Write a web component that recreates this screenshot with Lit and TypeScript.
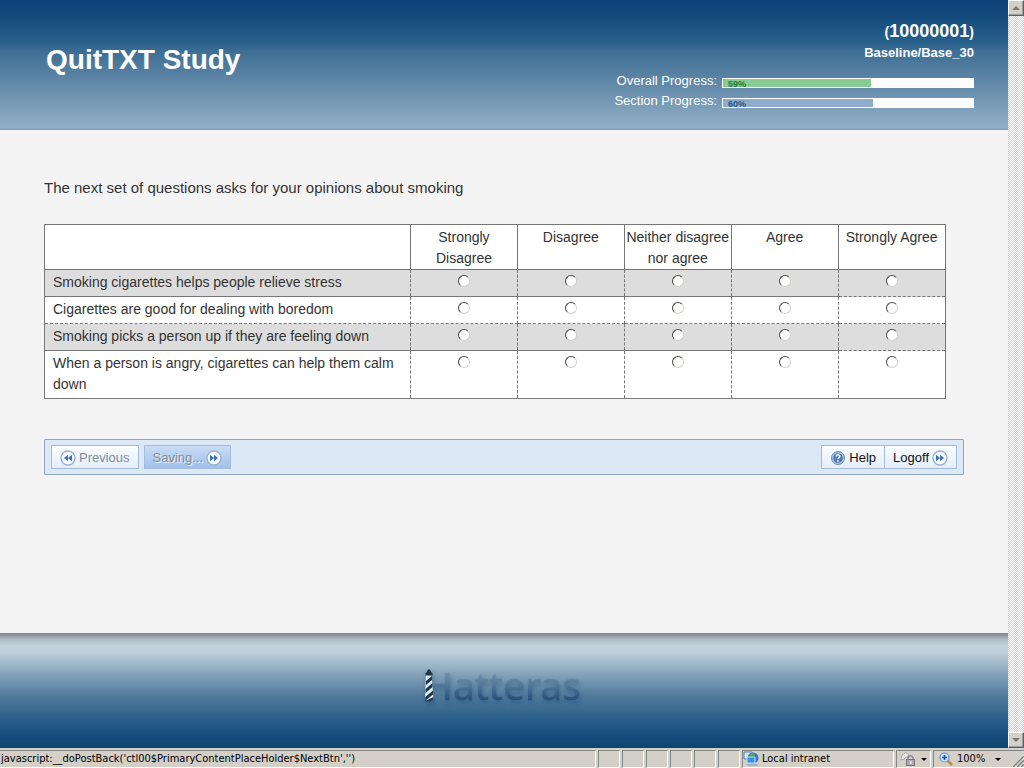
import { LitElement, html, css, svg } from "lit";
import { customElement } from "lit/decorators.js";

const OPTIONS = ["Strongly Disagree", "Disagree", "Neither disagree nor agree", "Agree", "Strongly Agree"];
const STATEMENTS = [
  "Smoking cigarettes helps people relieve stress",
  "Cigarettes are good for dealing with boredom",
  "Smoking picks a person up if they are feeling down",
  "When a person is angry, cigarettes can help them calm down",
];
const PROGRESS = [
  { label: "Overall Progress:", value: 59, kind: "overall" },
  { label: "Section Progress:", value: 60, kind: "section" },
];

const arrows = (back: boolean) => html`
  <svg class="icon" viewBox="0 0 16 16" aria-hidden="true">
    <circle cx="8" cy="8" r="7" fill="#f6faff" stroke="#9fb2cb" stroke-width="1.4" />
    ${back
      ? svg`<path d="M8 4.8v6.4L4 8zM12 4.8v6.4L8 8z" fill="#3c6fb4" />`
      : svg`<path d="M4 4.8v6.4L8 8zM8 4.8v6.4L12 8z" fill="#3c6fb4" />`}
  </svg>`;

const helpIcon = html`
  <svg class="icon" viewBox="0 0 16 16" aria-hidden="true">
    <circle cx="8" cy="8" r="6.5" fill="#a9c3e2" stroke="#6d8bb2" />
    <circle cx="8" cy="8" r="4.8" fill="#4f7cb4" />
    <path d="M6.2 6.6C6.2 4.2 9.9 4.3 9.8 6.5C9.8 7.7 8 7.7 8 9.2" fill="none" stroke="#fff" stroke-width="1.5" />
    <rect x="7.2" y="10.2" width="1.6" height="1.5" fill="#fff" />
  </svg>`;

@customElement("app-root")
export class AppRoot extends LitElement {
  static styles = css`
    :host {
      display: flex;
      flex-direction: column;
      height: 100vh;
      overflow: hidden;
      font-family: "Liberation Sans", Arial, sans-serif;
      color: #333;
      background: #f4f4f4;
    }
    .viewport { flex: 1; display: flex; min-height: 0; }
    .page { flex: 1; display: flex; flex-direction: column; min-width: 0; }
    .header {
      display: flex;
      justify-content: space-between;
      padding: 20px 34px 20px 46px;
      color: #fff;
      background: linear-gradient(#0b447a 0, #124a7c 12%, #27608a 32%, #3f6f95 40%, #6289a9 65%, #92b0c6 98%, #7c9ab0 100%);
    }
    .title { margin: 0; font-size: 28px; line-height: 32px; padding-top: 24px; }
    .status { display: flex; flex-direction: column; align-items: flex-end; }
    .ident { font-size: 14px; line-height: 22px; font-weight: bold; }
    .ident b { font-size: 18px; }
    .place { font-size: 13px; line-height: 20px; font-weight: bold; margin-bottom: 8px; }
    .meter { display: flex; align-items: center; gap: 5px; height: 20px; font-size: 13px; line-height: 20px; }
    .meter + .meter { margin-bottom: -1px; }
    .track {
      box-sizing: border-box;
      width: 252px;
      height: 10px;
      margin-top: 4px;
      background: #fcfcfc;
      border: 1px solid #fff;
    }
    .fill { height: 8px; font-size: 9px; line-height: 11px; font-weight: bold; text-indent: 5px; }
    .overall { background: #87cc92; color: #24783a; }
    .section { background: #8eadcd; color: #23568a; }
    .main { flex: 1; padding: 46px 44px 0; }
    .intro { margin: 0 0 24px; font-size: 15px; line-height: 24px; }
    .grid {
      width: 98%;
      border-collapse: collapse;
      table-layout: fixed;
      font-size: 14px;
      line-height: 21px;
      background: #fff;
      border: 1px solid #777;
    }
    .grid th { font-weight: normal; }
    .blank { width: 365px; border: 1px solid #777; padding: 0; }
    .option { padding: 2px 0 0; text-align: center; vertical-align: top; border: 1px solid #777; }
    .statement { padding: 2px 8px 3px; text-align: left; vertical-align: top; border-right: 1px dashed #777; }
    .choice { padding: 5px 0 0; text-align: center; vertical-align: top; border-right: 1px dashed #777; line-height: 0; }
    .choice:last-child { border-right: 1px solid #777; }
    .odd { background: #ddd; }
    .odd .statement, .odd .choice { border-bottom: 1px solid #777; }
    .odd .choice:last-child { border-bottom-style: dashed; }
    .even .statement, .even .choice { border-bottom: 1px dashed #777; }
    .even:last-child .statement, .even:last-child .choice { border-bottom-style: solid; }
    .radio {
      appearance: none;
      box-sizing: border-box;
      width: 12px;
      height: 12px;
      margin: 0;
      border: 1px solid;
      border-color: #444 #d4d0c8 #d4d0c8 #444;
      border-radius: 50%;
      background: #fff;
      vertical-align: top;
    }
    .toolbar {
      display: flex;
      align-items: center;
      margin-top: 40px;
      padding: 5px 6px;
      border: 1px solid #8fa5c0;
      border-radius: 1px;
      background: #dde8f6;
    }
    .btn {
      box-sizing: border-box;
      display: flex;
      align-items: center;
      gap: 3px;
      height: 24px;
      padding: 2px 8px 0;
      border: 1px solid #a3bddb;
      background: linear-gradient(#fafdff, #e3eefb);
      font: 13px/20px "Liberation Sans", Arial, sans-serif;
      color: #111;
    }
    .btn:disabled { color: #858c96; }
    .saving { margin-left: 5px; background: linear-gradient(#c9dcf5, #9fc0ec); text-shadow: 1px 1px 0 #e8f0fb; }
    .help { margin-left: auto; }
    .logoff { margin-left: -1px; }
    .icon { width: 16px; height: 16px; flex: none; }
    .footer {
      display: flex;
      justify-content: center;
      padding: 29px 0 34px;
      background: linear-gradient(#7f8284 0, #8f979c 2%, #aab7c0 5%, #c4d2db 11%, #bccdd8 18%, #84a2b9 36%, #527b9d 54%, #2a5e8a 75%, #124b7a 92%, #0e4570 100%);
    }
    .logo { display: block; width: 166px; height: 52px; overflow: visible; filter: drop-shadow(1px 3px 2px #1d4a7466); }
    .logotype { font-family: "Noto Sans", "Open Sans", sans-serif; font-size: 39px; }
    .scroll {
      width: 16px;
      display: flex;
      flex-direction: column;
      justify-content: space-between;
      background: repeating-conic-gradient(#d4d0c8 0 25%, #fff 0 50%) 0 0 / 2px 2px;
    }
    .arrow {
      box-sizing: border-box;
      width: 16px;
      height: 16px;
      padding: 3px;
      border: 1px solid;
      border-color: #fff #606060 #606060 #fff;
      background: #d4d0c8;
      box-shadow: inset -1px -1px #999;
    }
    .arrow svg { display: block; width: 8px; height: 8px; }
    .bar {
      display: flex;
      gap: 2px;
      height: 18px;
      padding-top: 2px;
      background: #d4d0c8;
      font: 11px/16px "DejaVu Sans Condensed", "DejaVu Sans", sans-serif;
      color: #000;
      white-space: nowrap;
    }
    .cell {
      box-sizing: border-box;
      display: flex;
      align-items: center;
      width: 22px;
      border: 1px solid;
      border-color: #868686 #fff #fff #868686;
    }
    .link { flex: 1; border-left: 0; padding-left: 1px; }
    .zone { width: 152px; gap: 3px; }
    .lock { width: 35px; gap: 5px; padding-left: 3px; }
    .zoom { width: 91px; gap: 3px; padding-left: 4px; justify-content: flex-start; border-right: 0; }
    .small { flex: none; width: 16px; height: 16px; }
    .caret { border: 3px solid transparent; border-top-color: #000; border-bottom: 0; }
    .zoom .caret { margin-left: 7px; }
    .grip { width: 14px; height: 14px; margin-left: auto; align-self: flex-end; }
  `;

  render() {
    return html`
      <div class="viewport">
        <div class="page">
          <header class="header">
            <h1 class="title">QuitTXT Study</h1>
            <div class="status">
              <div class="ident">(<b>10000001</b>)</div>
              <div class="place">Baseline/Base_30</div>
              ${PROGRESS.map((p) => html`
                <div class="meter">
                  <span id=${p.kind}>${p.label}</span>
                  <div class="track" role="progressbar" aria-labelledby=${p.kind} aria-valuenow=${p.value}>
                    <div class="fill ${p.kind}" style="width:${p.value}%">${p.value}%</div>
                  </div>
                </div>`)}
            </div>
          </header>
          <main class="main">
            <p class="intro">The next set of questions asks for your opinions about smoking</p>
            <table class="grid">
              <thead>
                <tr><td class="blank"></td>${OPTIONS.map((o) => html`<th class="option" scope="col">${o}</th>`)}</tr>
              </thead>
              <tbody>
                ${STATEMENTS.map((s, i) => html`
                  <tr class=${i % 2 ? "even" : "odd"}>
                    <th class="statement" scope="row">${s}</th>
                    ${OPTIONS.map((o) => html`<td class="choice"><input class="radio" type="radio" name="q${i}" aria-label="${s}: ${o}" /></td>`)}
                  </tr>`)}
              </tbody>
            </table>
            <nav class="toolbar">
              <button class="btn" disabled>${arrows(true)}Previous</button>
              <button class="btn saving" disabled>Saving... ${arrows(false)}</button>
              <button class="btn help">${helpIcon}Help</button>
              <button class="btn logoff">Logoff ${arrows(false)}</button>
            </nav>
          </main>
          <footer class="footer">
            <svg class="logo" viewBox="0 0 166 52" role="img" aria-label="Hatteras">
              <defs>
                <linearGradient id="ink" gradientUnits="userSpaceOnUse" x1="0" y1="8" x2="0" y2="40">
                  <stop offset="0" stop-color="#7897af" />
                  <stop offset="0.45" stop-color="#55799a" />
                  <stop offset="1" stop-color="#1d4a74" />
                </linearGradient>
              </defs>
              <text class="logotype" x="3" y="38" fill="url(#ink)" stroke="url(#ink)" stroke-width="0.5">Hatteras</text>
              <path d="M5 12H10.500L12.500 37Q8 41 4 38Z" fill="#e3ebf3" />
              <path d="M8 7L10 9V10L11.500 11V13.500H4.500V11L6 10V9Z" fill="#20364d" />
              <path d="M5 19L11 14V18L5 23ZM4.600 27L11.500 21V25L4.500 31ZM4.300 35L12 28.500V32.500L4 39ZM4 39L12.500 35V37.500Q8 41 4 39Z" fill="#20364d" />
            </svg>
          </footer>
        </div>
        <div class="scroll">
          <button class="arrow" aria-label="Scroll up"><svg viewBox="0 0 8 8"><path d="M0 6L4 2L8 6Z" fill="#777" /></svg></button>
          <button class="arrow" aria-label="Scroll down"><svg viewBox="0 0 8 8"><path d="M0 2L4 6L8 2Z" fill="#777" /></svg></button>
        </div>
      </div>
      <div class="bar">
        <div class="cell link">javascript:__doPostBack('ctl00$PrimaryContentPlaceHolder$NextBtn','')</div>
        ${[1, 2, 3, 4, 5, 6].map(() => html`<div class="cell"></div>`)}
        <div class="cell zone">
          <svg class="small" viewBox="0 0 16 16" aria-hidden="true">
            <path d="M1 1H9V8H1Z" fill="#d7e8f7" stroke="#4a7eb5" />
            <circle cx="10" cy="7" r="5.5" fill="#2d7bd0" />
            <path d="M7 3Q10 1 12 3L10 6L8 7Z" fill="#58a845" />
            <path d="M4 6H12V12H4Z" fill="#3d8fe0" stroke="#c9dcec" />
            <path d="M3 13H14L15 15H5Z" fill="#9db3c8" />
          </svg>
          Local intranet
        </div>
        <div class="cell lock">
          <svg class="small" viewBox="0 0 16 16" aria-hidden="true">
            <path d="M1 9L2 4L6 1.500L9 4L4 8Z" fill="#e6e6e6" stroke="#aaa" />
            <path d="M8 9V6.500Q10.500 3 13 6.500V9" fill="none" stroke="#888" stroke-width="1.500" />
            <rect x="6.500" y="8.500" width="8" height="6" fill="#aaa" stroke="#777" />
            <rect x="10" y="10" width="1.500" height="3" fill="#eee" />
          </svg>
          <span class="caret"></span>
        </div>
        <div class="cell zoom">
          <svg class="small" viewBox="0 0 16 16" aria-hidden="true">
            <path d="M9 9L14 14" stroke="#c08a4a" stroke-width="2.600" />
            <circle cx="6.500" cy="6.500" r="4.500" fill="#cfe6fb" stroke="#5b96d2" stroke-width="1.200" />
            <path d="M4 6.500H9M6.500 4V9" stroke="#1c56b0" stroke-width="1.700" />
          </svg>
          100%
          <span class="caret"></span>
          <svg class="grip" viewBox="0 0 14 14" aria-hidden="true">
            <path d="M2 14L14 2M6 14L14 6M10 14L14 10" stroke="#fff" />
            <path d="M3 14L14 3M7 14L14 7M11 14L14 11" stroke="#808080" stroke-width="1.500" />
          </svg>
        </div>
      </div>
    `;
  }
}
